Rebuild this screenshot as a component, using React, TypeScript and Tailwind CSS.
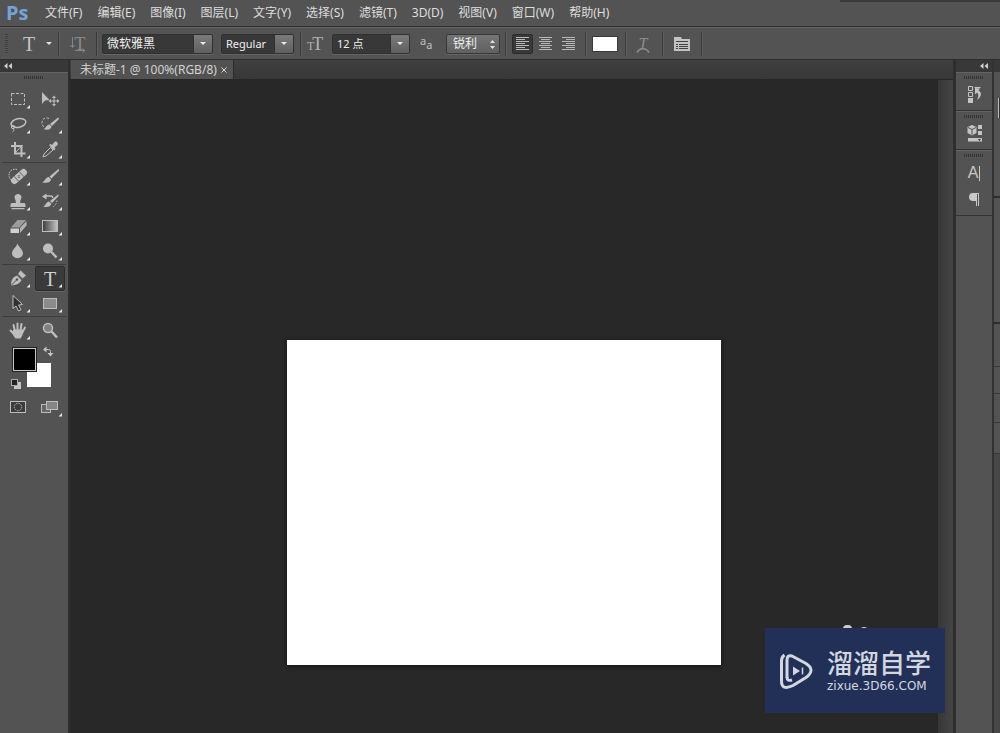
import { useState, type ReactNode } from "react";
import clsx from "clsx";

const menus = [
  "文件(F)",
  "编辑(E)",
  "图像(I)",
  "图层(L)",
  "文字(Y)",
  "选择(S)",
  "滤镜(T)",
  "3D(D)",
  "视图(V)",
  "窗口(W)",
  "帮助(H)",
];

type Tool = { name: string; icon: ReactNode; flyout?: boolean };

const toolGroups: Tool[][] = [
  [
    {
      name: "矩形选框工具",
      flyout: true,
      icon: <rect x="9.5" y="6.5" width="13" height="11" strokeDasharray="3 1.5" />,
    },
    {
      name: "移动工具",
      icon: (
        <>
          <path d="M8 5v12l3-3.500 4.500-.5z" fill="currentColor" stroke="none" />
          <path d="M16 14h8M20 10v8" />
          <path
            d="M20 8.500l2 2.500h-4zM20 19.500l2-2.500h-4zM14.500 14l2.500-2v4zM25.500 14l-2.500-2v4z"
            fill="currentColor"
            stroke="none"
          />
        </>
      ),
    },
    {
      name: "套索工具",
      flyout: true,
      icon: (
        <>
          <ellipse cx="16.500" cy="11" rx="7.500" ry="4.300" transform="rotate(-12 16.500 11)" strokeWidth="1.500" />
          <circle cx="11" cy="15" r="1.700" />
          <path d="M11 16.500c1.500 1 1 2.500-.5 3.500" />
        </>
      ),
    },
    {
      name: "快速选择工具",
      flyout: true,
      icon: (
        <>
          <path d="M15 6.500c-3-1.500-7 0-7 4 0 2 .6 3.500 2 4.500" strokeDasharray="2.500 1.500" />
          <path d="M24 5.500c1 .5 1 1.500.5 2l-6.500 6.500-2-2z" fill="currentColor" stroke="none" />
          <path d="M15.500 12.500l2 2c0 3-4 4-8 2.500 2.500-.5 2.500-4 6-4.500z" fill="currentColor" stroke="none" />
        </>
      ),
    },
    {
      name: "裁剪工具",
      flyout: true,
      icon: (
        <>
          <path d="M13 5v11.500h10.500M9 9h10.500v11" strokeWidth="2" />
          <path d="M13 16l7.500-8" />
        </>
      ),
    },
    {
      name: "吸管工具",
      flyout: true,
      icon: (
        <>
          <path d="M16.500 10.500l2.500 2.500-7 6-3 1 1-3z" />
          <path
            d="M15 8l1.500-1 1.500 1 2.500-3c1.500-1.500 4.500 1 3 3l-3 2.500 1 1.500-1.500 1.500z"
            fill="currentColor"
            stroke="none"
          />
        </>
      ),
    },
  ],
  [
    {
      name: "污点修复画笔工具",
      flyout: true,
      icon: (
        <>
          <path d="M15 5.500c-4-1-8 1-8 5.500 0 2 .5 3.500 2 5" strokeDasharray="1.500 1" />
          <g transform="rotate(-42 17 12.500)">
            <rect x="7.500" y="9" width="19" height="7" rx="3.500" fill="currentColor" stroke="none" />
            <path d="M13.500 9v7M20.500 9v7" stroke="#7a7a7a" />
            <path d="M15.500 12.500h3M17 11v3" stroke="#6a6a6a" strokeDasharray="1 1" />
          </g>
        </>
      ),
    },
    {
      name: "画笔工具",
      flyout: true,
      icon: (
        <>
          <path d="M24.500 5c.8.5.7 1.300 0 2.200l-7 7.300-2-2z" fill="currentColor" stroke="none" />
          <path d="M14.800 13l2.200 2.200c0 3.300-4.500 4.300-9 3 3-.4 3-4.700 6.800-5.200z" fill="currentColor" stroke="none" />
        </>
      ),
    },
    {
      name: "仿制图章工具",
      flyout: true,
      icon: (
        <path
          d="M16 5a3.300 3.300 0 0 1 3 5c-.7 1.300-.8 2.300-.8 4H22q1.500 0 1.500 1.500V18h-15v-2.500Q8.500 14 10 14h3.800c0-1.700-.1-2.700-.8-4a3.300 3.300 0 0 1 3-5zM9.500 19h13v1.200h-13z"
          fill="currentColor"
          stroke="none"
        />
      ),
    },
    {
      name: "历史记录画笔工具",
      flyout: true,
      icon: (
        <>
          <path d="M11 7h5.500c2 0 2.500 1 2 2" strokeWidth="1.500" />
          <path d="M8 7.500l4.500-3v6z" fill="currentColor" stroke="none" />
          <path d="M24 5.500c.8.500.7 1.500 0 2.200l-6 6.300-2-2z" fill="currentColor" stroke="none" />
          <path d="M15 12.500l2.200 2c0 3.300-4.500 4.300-8 3 2.500-.4 2.500-4.500 5.800-5z" fill="currentColor" stroke="none" />
          <path d="M23 11.500c-.3 3-2 5.500-5 7" strokeDasharray="1.500 1.500" />
        </>
      ),
    },
    {
      name: "橡皮擦工具",
      flyout: true,
      icon: (
        <>
          <path d="M15.500 6h8.500l-6.500 7.500h-8.500z" fill="#9c9c9c" stroke="none" />
          <path d="M8.500 14.500h8.500v4.500H8.500z" fill="#d0d0d0" stroke="none" />
          <path d="M18 14l6.500-7v4.500L18 19z" fill="#b4b4b4" stroke="none" />
        </>
      ),
    },
    {
      name: "渐变工具",
      flyout: true,
      icon: (
        <>
          <defs>
            <linearGradient id="fade">
              <stop offset="0" stopColor="#3c3c3c" />
              <stop offset="1" stopColor="#c4c4c4" />
            </linearGradient>
          </defs>
          <rect x="8.500" y="6.500" width="15" height="11" fill="url(#fade)" />
        </>
      ),
    },
    {
      name: "模糊工具",
      flyout: true,
      icon: (
        <path
          d="M15.500 4.500c1 3.500 5.500 6 5.500 9.800a5.500 5 0 0 1-11 0c0-3.800 4.500-6.300 5.500-9.800z"
          fill="currentColor"
          stroke="none"
        />
      ),
    },
    {
      name: "减淡工具",
      flyout: true,
      icon: (
        <>
          <circle cx="14" cy="9.500" r="5" fill="currentColor" stroke="none" />
          <path d="M17.500 13l5 5.500" strokeWidth="2.500" />
        </>
      ),
    },
  ],
  [
    {
      name: "钢笔工具",
      flyout: true,
      icon: (
        <>
          <path d="M9 19.500c0-5 1.500-8.500 6-10l4.500 4.500c-1.500 3.500-5.500 5-10.500 5.500z" fill="currentColor" stroke="none" />
          <path d="M16 8l2.500-3.500 5.500 5-3.500 3z" fill="currentColor" stroke="none" />
          <path d="M9.500 19l5-5" stroke="#535353" />
          <circle cx="15" cy="13.500" r="1.200" fill="#535353" stroke="none" />
        </>
      ),
    },
    { name: "横排文字工具", flyout: true, icon: null },
    {
      name: "路径选择工具",
      flyout: true,
      icon: <path d="M11 4.500v13l3-2.500 2.500 5 2.500-1.200-2.500-4.800 4-.5z" fill="#303030" />,
    },
    {
      name: "矩形工具",
      flyout: true,
      icon: <rect x="9.500" y="7.500" width="13" height="10" fill="#8b8b8b" />,
    },
  ],
  [
    {
      name: "抓手工具",
      flyout: true,
      icon: (
        <>
          <path
            d="M12.800 13l-1.300-6M15.500 12V5.500M18.500 12.500l1-6.500M20.500 14l2.500-4.500M12 16l-3.500-3.500"
            strokeWidth="2"
            strokeLinecap="round"
          />
          <path d="M11.500 11.500h9.500l.5 2c-.6 3-1.500 5-3 7h-5c-1.500-2-3-4-3.500-6z" fill="currentColor" stroke="none" />
        </>
      ),
    },
    {
      name: "缩放工具",
      icon: (
        <>
          <circle cx="14" cy="10" r="4.500" fill="#808080" strokeWidth="1.500" />
          <path d="M17.500 13.500l5.500 6" strokeWidth="2.500" />
        </>
      ),
    },
  ],
];

const alignments = [
  { name: "左对齐文本", lines: ["M2 0h13", "M2 2h9", "M2 4h13", "M2 6h9", "M2 8h13", "M2 10h9", "M2 12h13"] },
  { name: "居中对齐文本", lines: ["M2 0h13", "M4 2h9", "M2 4h13", "M4 6h9", "M2 8h13", "M4 10h9", "M2 12h13"] },
  { name: "右对齐文本", lines: ["M2 0h13", "M6 2h9", "M2 4h13", "M6 6h9", "M2 8h13", "M6 10h9", "M2 12h13"] },
];

function Divider({ className }: { className?: string }) {
  return <span className={clsx("h-6 w-px shrink-0 bg-[#3a3a3a] shadow-[1px_0_0_#5e5e5e]", className)} />;
}

function Collapse() {
  return (
    <svg width="8" height="6" viewBox="0 0 8 6" fill="#cfcfcf">
      <path d="M3.500 0v6L0 3zM8 0v6L4.500 3z" />
    </svg>
  );
}

function Grip() {
  return (
    <span className="flex h-[3px] w-5 flex-col justify-between bg-[repeating-linear-gradient(90deg,#343434_0_1px,#535353_1px_2px)]" />
  );
}

function Combo({ label, value, className }: { label: string; value: string; className: string }) {
  return (
    <div
      className={clsx(
        "relative flex h-5 shrink-0 overflow-hidden rounded-xs border border-[#303030] bg-[#383838] shadow-[0_1px_0_#666]",
        className
      )}
    >
      <select
        aria-label={label}
        className="w-full appearance-none pl-1 font-['Noto_Sans','Noto_Sans_CJK_SC',sans-serif] leading-4 text-[#f0f0f0] outline-none"
      >
        <option>{value}</option>
      </select>
      <span className="pointer-events-none absolute inset-y-0 right-0 flex w-[19px] items-center justify-center border-l border-[#303030] bg-linear-to-b from-[#7a7a7a] to-[#606060]">
        <svg width="6" height="3" fill="#e8e8e8">
          <path d="M0 0h6L3 3z" />
        </svg>
      </span>
    </div>
  );
}

function ToolButton({ tool, active, onSelect }: { tool: Tool; active: boolean; onSelect: () => void }) {
  return (
    <button
      type="button"
      aria-label={tool.name}
      aria-pressed={active}
      onClick={onSelect}
      className="relative flex h-[25px] w-8 items-center justify-center"
    >
      {active && (
        <span className="absolute inset-x-[1px] inset-y-0 rounded-xs border border-[#2c2c2c] bg-[#3a3a3a] shadow-[0_1px_0_#666]" />
      )}
      {!tool.icon && (
        <span className="relative font-['Liberation_Serif',serif] text-xl leading-5 text-[#d0d0d0]">T</span>
      )}
      <svg
        viewBox="0 0 32 25"
        className="absolute inset-0 h-[25px] w-8 text-[#bebebe]"
        fill="none"
        stroke="currentColor"
      >
        {tool.icon}
        {tool.flyout && <path d="M28 18v3.500h-3.500z" fill="#e6e6e6" stroke="none" />}
      </svg>
    </button>
  );
}

function OptionsBar() {
  const [align, setAlign] = useState(0);

  return (
    <div className="flex h-8 items-center border-t border-[#646464] bg-[#535353] pl-[5px]">
      <span className="h-5 w-[3px] shrink-0 bg-[repeating-linear-gradient(#3c3c3c_0_1px,#5a5a5a_1px_2px)]" />
      <button
        type="button"
        aria-label="工具预设"
        className="ml-[15px] flex w-[29px] shrink-0 items-center justify-between font-['Liberation_Serif',serif] text-xl leading-5 text-[#c4c4c4]"
      >
        T
        <svg width="6" height="3" fill="#e0e0e0">
          <path d="M0 0h6L3 3z" />
        </svg>
      </button>
      <Divider className="ml-[6px]" />
      <button
        type="button"
        aria-label="切换文本取向"
        className="relative ml-[11px] h-5 w-4 shrink-0 font-['Liberation_Serif',serif] text-lg leading-4 text-[#8a8a8a]"
      >
        <span className="block pl-1">T</span>
        <svg viewBox="0 0 16 20" className="absolute inset-0" fill="none" stroke="#858585">
          <path d="M2.500 3v10M.5 11l2 2.500 2-2.500M5 16.500h10M12.500 14.500l2.500 2-2.500 2" />
        </svg>
      </button>
      <Divider className="mx-[5px] ml-[10px]" />
      <Combo label="字体" value="微软雅黑" className="w-[111px] text-xs" />
      <Combo label="字体样式" value="Regular" className="ml-2 w-[73px] text-[11px]" />
      <Divider className="ml-[6px]" />
      <span className="ml-[6px] flex w-4 shrink-0 items-baseline font-['Liberation_Serif',serif] text-[#b0b0b0]">
        <span className="text-xs leading-4">T</span>
        <span className="-ml-0.5 text-lg leading-5">T</span>
      </span>
      <Combo label="字体大小" value="12 点" className="ml-[9px] w-[78px] text-[11px]" />
      <span className="ml-[10px] flex w-4 shrink-0 font-['Noto_Sans',sans-serif] text-[11px] leading-4 text-[#c0c0c0]">
        <span className="-mt-0.5">a</span>
        <span className="mt-0.5">a</span>
      </span>
      <div className="relative ml-[10px] flex h-5 w-[54px] shrink-0 rounded-xs border border-[#383838] bg-linear-to-b from-[#747474] to-[#606060] shadow-[0_1px_0_#666]">
        <select
          aria-label="消除锯齿"
          className="w-full appearance-none pl-1.5 font-['Noto_Sans','Noto_Sans_CJK_SC',sans-serif] text-xs leading-4 text-[#f0f0f0] outline-none"
        >
          <option>锐利</option>
        </select>
        <svg
          className="pointer-events-none absolute top-[5px] right-1"
          width="5"
          height="9"
          viewBox="0 0 5 9"
          fill="#e4e4e4"
        >
          <path d="M0 3h5L2.500 0zM0 6h5L2.500 9z" />
        </svg>
      </div>
      <Divider className="ml-[5px]" />
      <div className="ml-[6px] flex gap-[2px]">
        {alignments.map((item, i) => (
          <button
            key={item.name}
            type="button"
            aria-label={item.name}
            aria-pressed={align === i}
            onClick={() => setAlign(i)}
            className={clsx(
              "flex h-5 w-[21px] items-center justify-center rounded-xs border",
              align === i ? "border-[#2c2c2c] bg-[#383838]" : "border-transparent"
            )}
          >
            <svg width="17" height="13" viewBox="0 -0.500 17 13" stroke="#b8b8b8">
              {item.lines.map((d) => (
                <path key={d} d={d} />
              ))}
            </svg>
          </button>
        ))}
      </div>
      <Divider className="ml-[6px]" />
      <button
        type="button"
        aria-label="文本颜色"
        className="ml-[6px] h-4 w-[26px] shrink-0 border border-[#3a3a3a] bg-white"
      />
      <Divider className="ml-[7px]" />
      <button
        type="button"
        aria-label="创建文字变形"
        className="relative ml-[9px] h-5 w-4 shrink-0 font-['Liberation_Serif',serif] text-base leading-4 text-[#8c8c8c] italic"
      >
        <span className="block">T</span>
        <svg viewBox="0 0 16 20" className="absolute inset-0" fill="none" stroke="#8c8c8c" strokeWidth="1.500">
          <path d="M2 18.500c3-5 9-5 12 0" />
        </svg>
      </button>
      <Divider className="ml-[11px]" />
      <button type="button" aria-label="切换字符和段落面板" className="ml-[10px] shrink-0">
        <svg width="18" height="16" viewBox="0 0 18 16">
          <path d="M1 1h7l1 2h8v12H1z" fill="#c2c2c2" />
          <path d="M3 5.500h12M3 8.500h2M6 8.500h9M3 10.500h2M6 10.500h9M3 12.500h2M6 12.500h9" stroke="#444" />
        </svg>
      </button>
      <Divider className="ml-[10px]" />
    </div>
  );
}

function Toolbox() {
  const [current, setCurrent] = useState("横排文字工具");

  return (
    <aside className="flex w-[70px] shrink-0 flex-col border-r-2 border-[#2e2e2e] bg-[#535353]">
      <div className="flex h-3 items-center bg-[#383838] pl-1">
        <Collapse />
      </div>
      <div className="flex h-[15px] justify-center border-t border-[#646464] pt-[3px]">
        <Grip />
      </div>
      {toolGroups.map((group, i) => (
        <div
          key={group[0].name}
          className={clsx("mx-[2px] flex flex-wrap", i > 0 && "border-t border-[#3c3c3c] pt-px")}
        >
          {group.map((tool) => (
            <ToolButton
              key={tool.name}
              tool={tool}
              active={current === tool.name}
              onSelect={() => setCurrent(tool.name)}
            />
          ))}
        </div>
      ))}
      <svg width="68" height="50" viewBox="0 0 68 50" fill="none">
        <rect x="27" y="20" width="24" height="24" fill="#fff" />
        <rect x="12.500" y="4.500" width="24" height="24" fill="#333" stroke="#222" />
        <rect x="13.500" y="5.500" width="22" height="22" fill="#000" stroke="#c8c8c8" />
        <path d="M45.500 6.500h3q2 0 2 2v2" stroke="#c4c4c4" />
        <path d="M43 6.500l3.500-3v6zM50.500 13.500l-3-3.500h6z" fill="#c4c4c4" />
        <rect x="14" y="39" width="7" height="7" fill="#c4c4c4" />
        <rect x="11.500" y="36.500" width="6" height="6" fill="#222" stroke="#aaa" />
      </svg>
      <div className="mx-[2px] flex">
        <button type="button" aria-label="以快速蒙版模式编辑" className="h-8 w-8">
          <svg width="32" height="32" viewBox="0 0 32 32" fill="none" stroke="#bdbdbd">
            <rect x="8.500" y="8.500" width="15" height="11" fill="#3c3c3c" />
            <circle cx="16" cy="14" r="3.700" strokeDasharray="1.500 1" />
          </svg>
        </button>
        <button type="button" aria-label="更改屏幕模式" className="h-8 w-8">
          <svg width="32" height="32" viewBox="0 0 32 32" stroke="#bdbdbd">
            <rect x="7.500" y="11.500" width="9" height="8" fill="#666" />
            <rect x="12.500" y="8.500" width="11" height="8" fill="#858585" />
            <path d="M28 20v3.500h-3.500z" fill="#e6e6e6" stroke="none" />
          </svg>
        </button>
      </div>
    </aside>
  );
}

function Workspace() {
  return (
    <main className="flex min-w-0 flex-1 flex-col bg-[#282828]">
      <div className="flex h-5 items-stretch border-b border-[#262626] bg-linear-to-b from-[#404040] to-[#383838]">
        <div className="ml-px flex items-center border-r border-[#2c2c2c] bg-[#525252] pr-1.5 pl-[9px] text-[#d2d2d2]">
          <h1 className="text-xs leading-4">未标题-1 @ 100%(RGB/8)</h1>
          <button type="button" aria-label="关闭" className="ml-1 text-[#d8d8d8]">
            <svg width="6" height="6" viewBox="0 0 6 6" stroke="currentColor">
              <path d="M.5.500l5 5M5.500.500l-5 5" />
            </svg>
          </button>
        </div>
      </div>
      <div className="flex flex-1">
        <div className="flex flex-1 items-start justify-center pt-[260px] pb-[68px]">
          <div className="aspect-[434/325] w-1/2 bg-white shadow-[0_1px_4px_#111]" />
        </div>
        <div className="w-[15px] bg-linear-to-r from-[#373737] to-[#454545]" />
      </div>
    </main>
  );
}

function DockGroup({ children }: { children: ReactNode }) {
  return (
    <div className="flex flex-col items-center border-t border-b border-t-[#646464] border-b-[#333] pt-[3px] pb-[5px]">
      <Grip />
      {children}
    </div>
  );
}

function Dock() {
  return (
    <aside className="flex shrink-0 border-l-[3px] border-[#2e2e2e] bg-[#333]">
      <div className="flex w-9 flex-col bg-[#535353]">
        <div className="flex h-3 items-center justify-end bg-[#383838] pr-1">
          <Collapse />
        </div>
        <DockGroup>
          <button type="button" aria-label="历史记录" className="mt-1.5">
            <svg width="20" height="20" viewBox="0 0 20 20" fill="none" stroke="#c4c4c4">
              <path d="M4.500 1.500h4v4h-4zM4.500 7.500h4v4h-4z" />
              <path d="M4 13h5v5H4z" fill="#c4c4c4" stroke="none" />
              <path d="M10.500 2.500h6" />
              <path d="M11 3l5 .5-1.500 2c3.500 2 3.500 6-1.500 9.500 1.500-3 2-5.500 0-7.500l-2 2z" fill="#c4c4c4" stroke="none" />
            </svg>
          </button>
        </DockGroup>
        <DockGroup>
          <button type="button" aria-label="属性" className="mt-1.5">
            <svg width="20" height="20" viewBox="0 0 20 20" fill="#c4c4c4">
              <path d="M8 1l4.500 2v6L8 11.500 3.500 9V3z" />
              <path d="M4 3.500l4 2 4-2M8 5.500V11" stroke="#535353" fill="none" />
              <path d="M14 1h4v4h-4zM14 7h4v4h-4zM4 14h14v3.500H4z" />
              <path d="M14 15h3l-1.500 2z" fill="#333" />
            </svg>
          </button>
        </DockGroup>
        <DockGroup>
          <button
            type="button"
            aria-label="字符"
            className="mt-1 flex h-6 items-center font-['Liberation_Sans',sans-serif] text-base leading-4 text-[#c8c8c8]"
          >
            A<span className="ml-px h-[15px] w-px bg-[#c8c8c8]" />
          </button>
          <button type="button" aria-label="段落" className="mt-[5px]">
            <svg width="20" height="20" viewBox="0 0 20 20" fill="#c8c8c8">
              <path d="M15 3H9a4 4 0 0 0 0 8h3v5h1V4h1v12h1V3z" />
            </svg>
          </button>
        </DockGroup>
      </div>
      {/* edge of the collapsed panel column */}
      <div className="ml-[2px] flex w-[6px] flex-col bg-[#484848]">
        <div className="h-3 bg-[#383838]" />
        <div className="h-[126px] border-b-2 border-[#2e2e2e] bg-[#535353] pt-[26px] pl-1">
          <div className="h-5 border-l border-[#bbb] bg-[#333]" />
        </div>
        <div className="h-[126px] border-b-2 border-[#2e2e2e] bg-[#535353]" />
        <div className="h-[43px] border-b border-[#3a3a3a] bg-[#535353]" />
        <div className="h-[27px] border-b border-[#3a3a3a] bg-[#535353]" />
        <div className="h-[29px] border-b border-[#3a3a3a] bg-[#535353]" />
        <div className="h-[31px] border-b border-[#3a3a3a] bg-[#535353]" />
      </div>
    </aside>
  );
}

function Watermark() {
  return (
    <div className="absolute right-[55px] bottom-5">
      <span className="absolute -top-[3px] left-[78px] h-2 w-[9px] rounded-full bg-[#ccc]" />
      <span className="absolute -top-px left-[95px] h-2 w-2 rounded-full bg-[#ccc]" />
      <a href="#" className="relative flex h-[85px] w-[180px] items-center bg-[#223057] pl-[14px] text-[#d3d7e0]">
        <svg width="36" height="38" viewBox="0 0 36 38" fill="none" stroke="currentColor" strokeLinejoin="round">
          <path
            d="M8 26V8q0-5.500 5-4l14 7.500q10 6.500 0 14L14 33.500Q2.500 39 2.500 29V9q0-4 3-6"
            strokeWidth="3"
          />
          <path d="M8 25q0 4.500 5 3" strokeWidth="3" />
          <path d="M14 14.500v9l7-4.500z" fill="currentColor" stroke="none" />
          <path d="M23.500 15.500v7" strokeWidth="1.500" />
        </svg>
        <span className="ml-3 flex flex-col font-['Liberation_Sans','Noto_Sans_CJK_SC',sans-serif]">
          <span className="text-[26px] leading-[30px] font-medium">溜溜自学</span>
          <span className="font-['DejaVu_Sans',sans-serif] text-xs leading-[14px]">zixue.3D66.COM</span>
        </span>
      </a>
    </div>
  );
}

export default function App() {
  return (
    <div className="relative flex min-h-screen flex-col bg-[#535353] font-['Noto_Sans','Noto_Sans_CJK_SC',sans-serif]">
      <header>
        <nav className="flex h-[26px] items-center text-[#dedede]">
          <span className="w-[45px] shrink-0 pl-[6px] font-['Open_Sans',sans-serif] text-xl leading-6 font-bold text-[#76a3d3]">
            Ps
          </span>
          <div className="flex gap-[15px]">
            {menus.map((menu) => (
              <button key={menu} type="button" className="text-xs leading-4 whitespace-nowrap">
                {menu}
              </button>
            ))}
          </div>
          <span className="ml-auto h-0.5 w-40 self-start bg-[#3a3a3a]" />
        </nav>
        <div className="border-y border-[#2e2e2e]">
          <OptionsBar />
        </div>
      </header>
      <div className="flex flex-1 items-stretch">
        <Toolbox />
        <Workspace />
        <Dock />
      </div>
      <Watermark />
    </div>
  );
}
